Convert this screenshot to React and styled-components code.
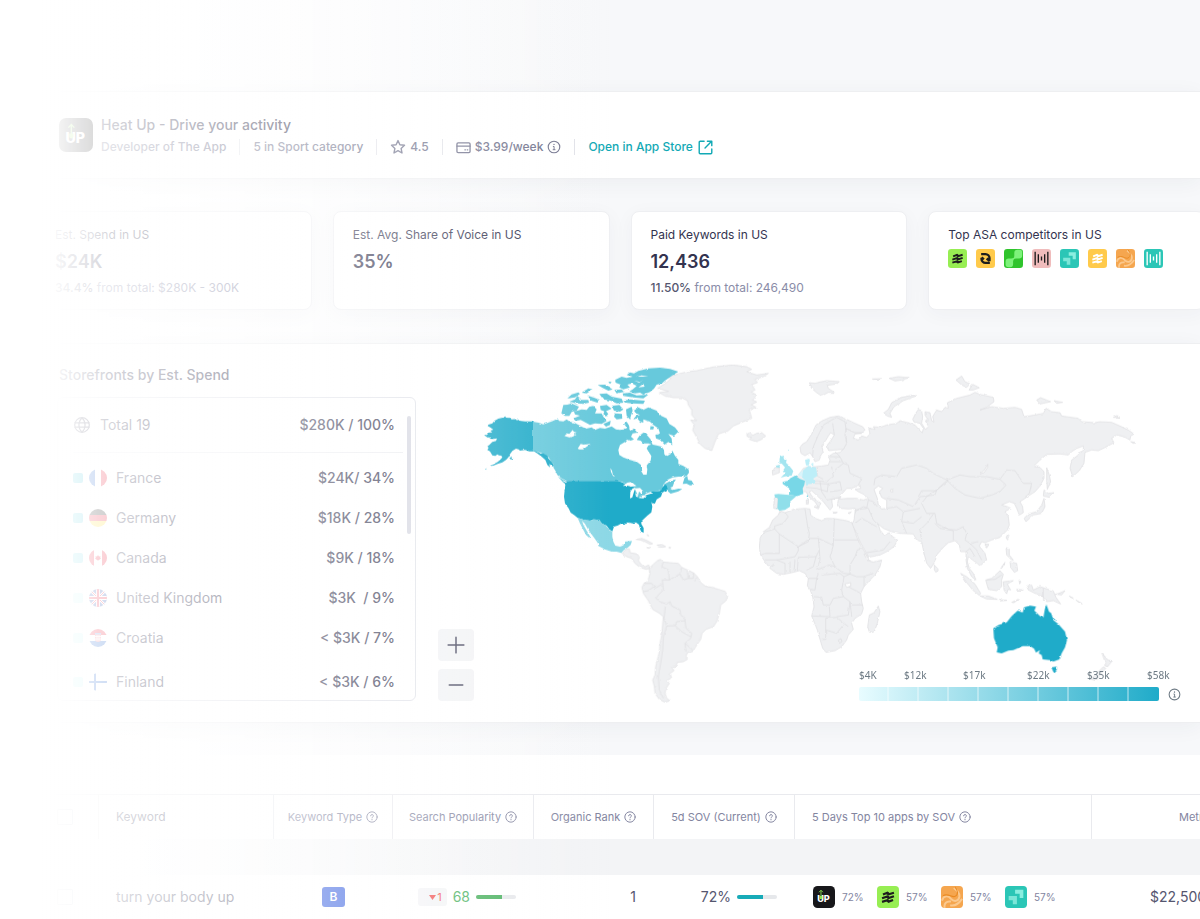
import React from "react";
import styled, { createGlobalStyle } from "styled-components";

const GlobalStyle = createGlobalStyle`
  * {
    box-sizing: border-box;
  }
  body {
    margin: 0;
    background: #f8f9fb;
    color: #33334f;
    font-family: Inter, "Liberation Sans", sans-serif;
    font-size: 14px;
    line-height: 20px;
  }
  h1, h2, h3, p, ul {
    margin: 0;
    padding: 0;
    list-style: none;
  }
`;

const Page = styled.div`
  position: relative;
  min-height: 100vh;
  padding-top: 91px;
  overflow: hidden;
  background: linear-gradient(90deg, #fff 100px, #f7f8fa 600px);
`;

const Fade = styled.div`
  position: absolute;
  inset: 0;
  pointer-events: none;
  background: linear-gradient(
    90deg,
    #fff 42px,
    rgba(255, 255, 255, 0.8) 110px,
    rgba(255, 255, 255, 0.52) 300px,
    rgba(255, 255, 255, 0) 610px
  );
`;

const Header = styled.header`
  display: flex;
  gap: 8px;
  padding: 26px 59px 23px;
  background: #fff;
  border: 1px solid #eeeff1;
  border-width: 1px 0;
  box-shadow: 0 4px 20px rgba(40, 50, 80, 0.05);
`;

const HeaderText = styled.div`
  display: flex;
  flex-direction: column;
  margin-top: -3px;
  gap: 4px;
`;

const AppTitle = styled.h1`
  font-size: 14px;
  line-height: 20px;
  font-weight: 500;
`;

const Meta = styled.div`
  display: flex;
  align-items: center;
  font-size: 12px;
  line-height: 16px;
  font-weight: 500;
  color: #70728c;
`;

const MetaItem = styled.span`
  display: flex;
  align-items: center;
  gap: 4px;
  padding-right: 13px;
  margin-right: 13px;
  border-right: 1px solid #e1e2e8;
`;

const StoreLink = styled.a`
  display: flex;
  align-items: center;
  gap: 5px;
  color: #12a9b5;
  text-decoration: none;
`;

const Cards = styled.section`
  display: grid;
  grid-template-columns: repeat(4, 1fr);
  gap: 21px;
  width: calc(100% - 30px);
  margin: 32px 0 33px 35px;
`;

const Card = styled.article`
  padding: 14px 19px 12px;
  background: #fff;
  border: 1px solid #eeeff2;
  border-radius: 8px;
  box-shadow: 0 4px 20px rgba(40, 50, 80, 0.04);
`;

const CardTitle = styled.h2`
  font-size: 12px;
  line-height: 18px;
  font-weight: 400;
`;

const CardValue = styled.p`
  margin: 5px 0 4px;
  font-size: 18px;
  line-height: 26px;
  font-weight: 600;
`;

const CardNote = styled.p`
  font-size: 12px;
  line-height: 18px;
  color: #8a8ca8;
  b {
    font-weight: 500;
    color: #55566f;
  }
`;

const IconRow = styled.div`
  display: flex;
  gap: 9px;
  margin-top: 5px;
`;

const Storefronts = styled.section`
  display: flex;
  align-items: flex-start;
  background: #fff;
  border: 1px solid #eeeff1;
  border-width: 1px 0;
  box-shadow: 0 4px 20px rgba(40, 50, 80, 0.05);
`;

const ListColumn = styled.div`
  flex: 0 0 416px;
  padding: 21px 0 21px 57px;
`;

const SectionTitle = styled.h2`
  margin: 0 2px 12px;
  font-size: 14px;
  line-height: 20px;
  font-weight: 500;
`;

const ListBox = styled.div`
  position: relative;
  max-height: 304px;
  padding: 0 12px 0 15px;
  overflow: hidden;
  border: 1px solid #dfe1e8;
  border-radius: 6px;
`;

const ScrollThumb = styled.div`
  position: absolute;
  top: 18px;
  right: 4px;
  width: 4px;
  height: 118px;
  border-radius: 2px;
  background: #d3d5e0;
`;

const TotalRow = styled.div`
  display: flex;
  align-items: center;
  gap: 10px;
  height: 55px;
  margin-bottom: 5px;
  padding: 0 8px 0 1px;
  border-bottom: 1px solid #ebecf0;
`;

const CountryRow = styled.li`
  display: flex;
  align-items: center;
  height: 40px;
  padding-right: 8px;
  &:last-child {
    margin-top: 4px;
  }
`;

const Swatch = styled.span`
  width: 10px;
  height: 10px;
  margin-right: 6px;
  border-radius: 2px;
  background: ${(props) => props.$color};
`;

const CountryName = styled.span`
  margin-left: 9px;
`;

const RowValue = styled.span`
  margin-left: auto;
  font-weight: 500;
  white-space: pre;
`;

const MapArea = styled.div`
  position: relative;
  flex: 1;
  align-self: stretch;
  padding: 6px 0 0 14px;
`;

const MapSvg = styled.svg`
  display: block;
  width: 100%;
  max-width: 720px;
`;

const ZoomControls = styled.div`
  position: absolute;
  left: 22px;
  bottom: 21px;
  display: flex;
  flex-direction: column;
  gap: 8px;
`;

const ZoomButton = styled.button`
  display: flex;
  align-items: center;
  justify-content: center;
  width: 36px;
  height: 32px;
  padding: 0;
  border: none;
  border-radius: 4px;
  background: #f2f3f5;
  color: #3d3e55;
  cursor: pointer;
`;

const Legend = styled.div`
  position: absolute;
  right: 19px;
  bottom: 21px;
  display: flex;
  align-items: flex-end;
  gap: 9px;
  color: #6d7a84;
`;

const LegendScale = styled.div`
  width: 300px;
`;

const LegendLabels = styled.div`
  display: grid;
  grid-template-columns: 45px 59px 64px 60px 60px 24px;
  margin-bottom: 5px;
  font-family: "Noto Sans", sans-serif;
  font-size: 10px;
  line-height: 14px;
`;

const LegendBar = styled.div`
  display: grid;
  grid-template-columns: repeat(10, 1fr);
  height: 14px;
  border-radius: 2px;
  overflow: hidden;
  background: linear-gradient(90deg, #e8fcff, #1fabc9);
`;

const LegendStep = styled.span`
  border-right: 2px solid rgba(255, 255, 255, 0.35);
  &:last-child {
    border: none;
  }
`;

const KeywordSection = styled.section`
  margin-top: 32px;
  padding-top: 39px;
  background: #fff;
`;

const KeywordTable = styled.table`
  width: 100%;
  table-layout: fixed;
  border-collapse: separate;
  border-spacing: 0;
`;

const HeadCell = styled.th`
  height: 45px;
  padding: 0 ${(props) => props.$pad || 0}px;
  border-top: 1px solid #e9eaee;
  border-right: 1px solid #e9eaee;
  font-size: ${(props) => (props.$large ? 12 : 11)}px;
  line-height: 16px;
  font-weight: 400;
  color: ${(props) => (props.$large ? "#55566f" : "#83859f")};
  text-align: left;
  white-space: nowrap;
  overflow: hidden;
  &:last-child {
    border-right: none;
  }
`;

const HeadLabel = styled.span`
  display: flex;
  align-items: center;
  justify-content: ${(props) => (props.$center ? "center" : "flex-start")};
  gap: 4px;
`;

const BandCell = styled.td`
  height: 36px;
  padding: 0;
  background: linear-gradient(90deg, #fff 60px, #f3f4f6 500px);
`;

const Cell = styled.td`
  height: 44px;
  padding: 0 ${(props) => props.$pad || 0}px;
  white-space: nowrap;
  overflow: hidden;
  color: #55566f;
`;

const CellFlex = styled.div`
  display: flex;
  align-items: center;
  justify-content: ${(props) => props.$justify || "flex-end"};
  gap: 6px;
`;

const CheckBox = styled.input`
  appearance: none;
  display: block;
  width: 16px;
  height: 16px;
  margin: 0 0 0 57px;
  border: 1px solid #c9ccd6;
  border-radius: 1px;
`;

const TypeBadge = styled.span`
  width: 23px;
  border-radius: 3px;
  background: #3a62e0;
  color: #fff;
  font-size: 12px;
  font-weight: 600;
  text-align: center;
`;

const Drop = styled.span`
  display: flex;
  align-items: center;
  justify-content: flex-end;
  gap: 1px;
  width: 29px;
  height: 18px;
  padding-right: 5px;
  border-radius: 3px;
  background: #f3f4f6;
  color: #f0504f;
  font-size: 11px;
`;

const Score = styled.span`
  color: #47b05c;
`;

const Track = styled.span`
  width: 40px;
  height: 4px;
  border-radius: 2px;
  overflow: hidden;
  background: #e6e8eb;
`;

const Fill = styled.span`
  display: block;
  height: 100%;
  background: ${(props) => props.$color};
`;

const AppList = styled.div`
  display: flex;
  margin-left: 1px;
`;

const AppShare = styled.span`
  display: flex;
  align-items: center;
  gap: 7px;
  flex: 0 0 64px;
  font-size: 10px;
  color: #83859f;
`;

/* ---------- icons ---------- */

const LineIcon = ({ size = 14, width = 1.3, children }) => (
  <svg width={size} height={size} viewBox="0 0 16 16" fill="none" stroke="currentColor" strokeWidth={width} strokeLinecap="round" strokeLinejoin="round" aria-hidden="true">
    {children}
  </svg>
);

const InfoIcon = ({ size = 14 }) => (
  <LineIcon size={size}>
    <circle cx="8" cy="8" r="6.6" />
    <path d="M7.2 7.4h.9v3.5M7 11.100h2.200" strokeWidth="1.100" />
    <path d="M8 4.900v.2" strokeWidth="1.500" />
  </LineIcon>
);

const HelpIcon = () => (
  <LineIcon size={12} width={1.3}>
    <circle cx="8" cy="8" r="6.9" />
    <path d="M6.2 6.4a1.8 1.8 0 1 1 2.6 1.7c-.6.3-.8.6-.8 1.1" />
    <path d="M8 11.3v.2" strokeWidth="1.6" />
  </LineIcon>
);

const StarIcon = () => (
  <LineIcon size={16} width={1.4}>
    <path d="M8 1.6l1.9 4.2 4.6.5-3.4 3.1.9 4.6L8 11.7 4 14l.9-4.6L1.5 6.3l4.6-.5z" />
  </LineIcon>
);

const PriceIcon = () => (
  <LineIcon size={15} width={1.4}>
    <rect x="1" y="3" width="14" height="10.5" rx="1.2" />
    <path d="M1 6.500h14M9.500 10.500h.5M12 10.500h.5" />
  </LineIcon>
);

const OpenIcon = () => (
  <LineIcon size={15} width={1.5}>
    <path d="M6.500 1.300H2.300a1 1 0 0 0-1 1v11.400a1 1 0 0 0 1 1h11.400a1 1 0 0 0 1-1V9.500" />
    <path d="M10 1.300h4.700V6M14.300 1.700L7.500 8.500" />
  </LineIcon>
);

const GlobeIcon = () => (
  <LineIcon size={16} width={1.2}>
    <circle cx="8" cy="8" r="7.3" />
    <path d="M1 5.800h14M1 10.200h14M8 .7C3.900 4.500 3.900 11.500 8 15.300M8 .7c4.100 3.800 4.100 10.800 0 14.600" />
  </LineIcon>
);

const UpText = styled.text`
  font: 800 10px Inter, sans-serif;
  fill: #fff;
`;

const art = {
  up: (
    <>
      <rect width="24" height="24" rx="5" fill="#17171a" />
      <UpText x="4.5" y="17.5">UP</UpText>
      <path d="M8.700 13V5M6.600 6.800l2.100-2.200 2.100 2.200" stroke="#8be04e" strokeWidth="1" fill="none" />
      <path d="M7.200 11h3v2a1.500 1.500 0 0 1-3 0z" fill="#8be04e" />
    </>
  ),
  bars: (color, mark) => (
    <>
      <rect width="24" height="24" rx="4" fill={color} />
      <path
        d="M6.500 9.200l5.500-2.200v2.300l6.500-2M5.500 13.300l6.500-2.200v2.300l6.500-2.200M5.500 17.300l6.500-2v2l5.500-2"
        stroke={mark}
        strokeWidth="2.400"
        strokeLinejoin="bevel"
        fill="none"
      />
    </>
  ),
  swirl: (
    <>
      <rect width="24" height="24" rx="4" fill="#ffca4b" />
      <path d="M6.500 6.500L12 6.500a5 5 0 0 1 5 5v4M17.500 17.500L12 17.500a5 5 0 0 1-5-5v-1.500M7 10.500l3 2.500M17 15l-3.500-3" stroke="#1d1d1d" strokeWidth="3" fill="none" />
    </>
  ),
  leaf: (
    <>
      <rect width="24" height="24" rx="4" fill="#2fc42c" />
      <path d="M12 11.500q1-1 1-3V5q0-4 4-4h3q3 0 3 3v4q0 4-4 4h-4q-3 0-3.500 3v4q0 4-4 4H6q-4 0-4-3.500V16q0-4 4-4h3q2 0 3-.5z" fill="#7df27a" />
    </>
  ),
  wave: (color, mark) => (
    <>
      <rect width="24" height="24" rx="4" fill={color} />
      <path d="M4 3.500v17M8 6.500v11M12 9.500v5M16 6.500v11M20 3.500v17" stroke={mark} strokeWidth="1.700" />
    </>
  ),
  steps: (
    <>
      <rect width="24" height="24" rx="4" fill="#2bc6b6" />
      <path d="M11 4h9v9h-4V8.500h-5z" fill="#8aeee0" />
      <path d="M4 11h9v9H8.500v-4.500H4z" fill="#7de6d8" />
    </>
  ),
  twist: (
    <>
      <rect width="24" height="24" rx="4" fill="#f5a64f" />
      <path d="M1 16C3 10 8 10 11 14c3 3.500 8 3 9-2 .8-4-2-7-6-10M4 24c-1-5 2-8 7-7M23 14c-4 6-8 8-13 7" stroke="#fbc98e" strokeWidth="2.200" fill="none" />
      <path d="M15 1c4 4 4 9 0 10.500-4 1-7-4-13-1" stroke="#ea8a22" strokeWidth="1.200" fill="none" />
    </>
  ),
};

const AppIcon = ({ size = 19, children }) => (
  <svg width={size} height={size} viewBox="0 0 24 24" aria-hidden="true">
    {children}
  </svg>
);

const flags = {
  France: (
    <>
      <path fill="#fff" d="M0 0h18v18H0z" />
      <path fill="#1057c8" d="M0 0h6v18H0z" />
      <path fill="#e8112d" d="M12 0h6v18h-6z" />
    </>
  ),
  Germany: (
    <>
      <path fill="#111" d="M0 0h18v6H0z" />
      <path fill="#e8112d" d="M0 6h18v6H0z" />
      <path fill="#ffda2c" d="M0 12h18v6H0z" />
    </>
  ),
  Canada: (
    <>
      <path fill="#fff" d="M0 0h18v18H0z" />
      <path fill="#e8112d" d="M0 0h5v18H0zM13 0h5v18h-5zM9 6l1 1.500 1.500-.3-.3 1.500.8.8-2 1.500H9.300V12h-.6v-1H8l-2-1.500.8-.8-.3-1.500 1.500.3z" />
    </>
  ),
  "United Kingdom": (
    <>
      <path fill="#1c48ac" d="M0 0h18v18H0z" />
      <path stroke="#fff" strokeWidth="2.500" d="M0 0l18 18M18 0L0 18" />
      <path stroke="#e8112d" strokeWidth="1" d="M0 0l18 18M18 0L0 18" />
      <path stroke="#fff" strokeWidth="4" d="M9 0v18M0 9h18" />
      <path stroke="#e8112d" strokeWidth="2.200" d="M9 0v18M0 9h18" />
    </>
  ),
  Croatia: (
    <>
      <path fill="#e8112d" d="M0 0h18v6H0z" />
      <path fill="#fff" d="M0 6h18v6H0z" />
      <path fill="#1057c8" d="M0 12h18v6H0z" />
      <path fill="#ef6a78" d="M6 5h6v5q0 3-3 3t-3-3z" />
      <path fill="#5b8fe0" d="M6 4h6v1.500H6z" />
      <path stroke="#fff" strokeWidth=".8" d="M6 7.500h6M6 10h6M8 6v6M10 6v6" />
    </>
  ),
  Finland: (
    <>
      <path fill="#fff" d="M0 0h18v18H0z" />
      <path stroke="#1057c8" strokeWidth="2" d="M6 0v18M0 9h18" />
    </>
  ),
};

const Flag = ({ name }) => (
  <svg width="18" height="18" viewBox="0 0 18 18" role="img" aria-label={name}>
    <clipPath id={`flag-${name[0]}${name.length}`}>
      <circle cx="9" cy="9" r="9" />
    </clipPath>
    <g clipPath={`url(#flag-${name[0]}${name.length})`}>{flags[name]}</g>
  </svg>
);

/* ---------- world map ---------- */

const NORTH_AMERICA = {
  alaska:
    "M309 214L285 214 268 212 262 207 245 208 240 204 228 203 226 199 218 203 205 206 193 213 187 220 175 224 173 228 182 233 190 239 181 242 187 247 176 248 172 254 165 257 172 262 182 262 178 266 190 267 201 265 198 273 187 276 178 285 172 289 176 293 172 300 180 304 184 311 187 316 196 318 202 313 207 316 214 317 217 322 210 330 203 336 190 343 182 348 190 347 203 342 217 337 228 330 235 322 241 311 247 303 258 296 266 298 270 302 285 300 298 304 309 304zM309 302L322 304 332 311 340 310 352 317 355 325 365 336 372 346 369 350 358 342 360 352 352 345 346 330 335 320 322 310zM165 357L170 355 168 359zM238 324L246 320 250 325 243 329z",
  canada:
    "M309 215L325 218 340 223 352 219 365 214 377 209 383 205 387 213 400 214 410 208 420 216 432 217 440 222 455 230 468 236 485 232 495 240 510 234 525 236 545 229 558 238 570 240 580 238 590 232 582 222 590 215 597 226 600 242 612 236 622 248 608 250 603 260 612 268 602 272 592 268 585 276 570 285 565 300 568 315 580 322 600 330 620 335 633 345 633 362 640 374 650 374 652 358 650 346 662 332 664 318 656 306 650 295 655 286 665 283 680 286 695 290 702 300 703 313 712 318 722 312 727 302 735 318 745 330 745 342 760 348 776 358 777 368 770 378 758 380 745 380 728 382 712 390 705 398 700 404 715 396 730 390 738 388 733 396 728 410 720 414 730 420 745 416 757 417 745 424 722 431 714 424 711 408 700 404 695 420 668 425 655 434 640 440 625 442 612 425 605 405 587 402 577 396 563 393 413 393 408 392 395 385 382 375 376 362 370 352 372 345 364 335 356 322 345 315 332 308 322 304 309 304z",
  arctic:
    "M400 165L412 164 425 160 447 170 440 182 425 186 418 198 405 198 394 190zM432 185L455 178 470 180 478 170 490 168 500 178 495 190 515 190 520 200 530 213 515 222 495 220 480 225 462 215 452 210 440 212 430 205 450 197 435 193zM418 155L435 148 442 138 455 150 475 150 477 158 460 162 440 160zM412 145L425 133 445 127 450 132 435 142zM455 128L475 115 488 119 470 130zM472 136L492 143 510 150 502 158 484 152zM503 105L525 104 548 118 535 122 518 114zM535 95L545 96 540 102zM508 132L530 130 545 140 575 146 580 158 560 160 542 152 520 148zM553 120L575 118 582 126 560 130zM510 168L530 165 545 176 525 185 512 180zM525 180L535 192 528 200 520 192zM545 168L568 165 580 178 570 185 552 182zM555 190L575 192 577 206 560 208 552 200zM520 222L542 212 540 225 528 230zM580 152L600 148 645 152 640 162 605 160 585 158zM578 130L600 128 620 136 655 134 640 145 610 142 580 138zM588 178L605 170 608 182 603 196 600 208 590 198zM640 248L648 252 662 268 668 285 655 280 640 280 632 272 620 270 628 258zM662 228L672 230 670 238 660 238z",
  ellesmere:
    "M745 65L720 57 690 53 655 55 625 63 612 70 600 67 590 75 605 80 590 84 575 80 555 90 557 98 572 104 568 112 580 118 600 112 592 104 606 100 620 108 608 118 598 124 615 130 630 128 640 134 660 126 672 116 680 104 696 100 705 92 725 78z",
  baffin:
    "M612 182L625 172 640 180 655 172 680 182 688 195 710 205 718 222 735 232 745 245 732 258 715 252 725 265 727 286 715 276 704 284 690 270 678 265 676 255 690 250 685 235 670 225 660 215 640 208 640 218 630 215 622 205 610 208 618 198 630 195 618 190z",
  newfoundland: "M758 402L764 382 772 378 774 390 785 392 792 405 780 406 770 401z",
  island: "M384 380L398 388 410 398 413 405 400 398z",
  usa:
    "M413 393L563 393 577 397 588 403 605 405 612 412 618 440 630 442 642 438 655 434 668 424 690 423 697 412 705 403 711 408 714 418 703 424 697 428 693 440 680 448 675 460 669 462 664 456 667 470 664 487 652 497 640 508 634 515 634 522 641 534 641 547 637 550 631 540 627 524 618 517 608 520 596 517 588 522 574 520 564 526 552 530 547 544 538 538 530 527 515 520 508 510 490 508 480 512 463 510 443 504 432 495 422 488 416 475 405 460 402 440 404 420 406 405 403 396z",
  mexico:
    "M443 504L463 510 480 512 492 508 508 510 517 521 528 527 537 540 547 545 547 560 550 575 556 587 570 590 580 586 584 575 606 573 602 585 594 592 582 600 574 609 560 605 545 605 525 598 505 588 503 578 490 560 475 540 465 522 456 512 460 524 470 542 482 562 478 564 468 555 460 540 450 520z",
  lakes:
    "M403 258L412 250 418 252 428 240 432 246 440 247 432 252 440 254 428 260 418 262zM443 296L452 282 462 284 482 282 470 290 460 298 448 298zM541 354L546 362 548 372 555 380 549 378 543 366zM578 408L592 398 605 396 614 404 620 408 604 410 592 407zM600 445L601 425 608 415 616 413 612 425 607 442zM614 415L630 414 640 424 634 432 627 424 623 442 620 428zM625 444L640 436 655 434 640 445zM645 432L662 426 666 430 650 434zM642 88L630 96 612 92 628 98zM655 80L635 76 618 80 634 80zM640 102L625 112 644 110z",
  caribbean:
    "M618 568L635 565 652 572 668 581 660 583 645 575 630 570zM682 585L695 583 707 590 695 592 683 590zM716 592L722 592 720 595zM650 592L660 593 655 595zM652 553L656 558 653 558z",
};

const ATLANTIC = {
  greenland:
    "M173 115L200 97 213 85 202 80 235 72 262 65 290 62 320 55 345 50 400 45 440 50 455 58 440 65 470 75 505 70 490 80 465 88 472 98 455 104 465 120 454 126 470 135 458 150 470 156 454 164 468 172 448 180 455 205 430 215 400 228 385 242 355 252 345 275 335 302 315 295 300 282 290 262 278 240 283 225 272 210 290 212 275 195 275 180 265 165 262 152 245 143 220 143 195 138 178 128 205 124 184 118z",
  iceland: "M440 253L450 248 458 256 470 250 485 248 497 258 485 268 468 275 448 268 455 262 442 260z",
  south:
    "M147 655L160 643 172 632 182 628 190 636 210 638 235 640 245 652 262 660 280 668 292 680 302 697 315 708 335 712 355 718 375 724 383 738 378 752 362 765 358 790 350 815 340 830 318 838 306 850 302 868 290 885 278 905 262 908 258 918 262 928 250 935 232 937 228 948 215 952 222 962 208 972 212 985 200 992 208 1000 198 1015 195 1030 200 1045 210 1052 195 1057 178 1048 165 1030 163 1010 158 990 165 975 167 950 172 930 178 905 180 880 186 850 188 820 190 800 178 790 158 778 145 752 130 730 126 712 132 700 145 688 150 670z",
  central: "M66 610L78 598 88 596 90 608 112 612 118 622 115 632 125 645 135 650 146 645 149 655 138 658 120 652 105 640 95 625 80 620z",
  borders:
    "M132 700L155 700 165 715 187 702M130 725L145 722 165 708M187 690L190 720 175 735 168 745 182 756 200 762 210 755M190 636L185 650 205 660 208 690 187 690M245 652L240 672 225 680 208 690M262 662L265 685 250 690 240 672M280 668L280 685 265 685M292 682L283 690M210 755L215 768 240 780 242 795 255 805 255 812 230 815 225 827 200 828 192 805 196 770M255 812L258 835 275 850 272 865 255 880 258 905M225 827L245 845 272 860M255 880L278 900M200 828L190 860 188 900 182 940 175 980 178 1020 190 1045",
};

const EURASIA = {
  mainland:
    "M318 205L345 218 365 220 345 222 340 235 355 240 365 228 380 232 390 222 386 204 405 208 400 200 420 202 440 195 470 190 480 182 500 187 515 192 525 195 540 212 547 218 550 205 540 190 522 186 518 178 526 162 535 148 545 152 548 170 545 190 556 208 566 200 556 182 565 182 555 165 555 155 570 158 575 182 582 186 578 170 590 150 605 155 615 142 625 145 622 128 650 115 690 105 705 97 720 103 760 112 762 125 740 142 720 150 755 140 790 145 825 142 845 148 852 170 885 165 910 160 918 145 935 155 960 158 965 168 1015 175 1025 185 1065 188 1080 185 1115 187 1140 198 1165 210 1182 222 1172 228 1170 240 1152 230 1130 225 1115 235 1122 248 1100 260 1075 272 1055 270 1035 277 1032 310 1018 332 998 350 990 325 995 300 1015 285 1030 270 1030 258 1010 265 995 275 985 285 960 282 920 283 900 300 880 320 900 322 912 335 912 355 900 378 885 395 865 408 855 415 840 425 848 440 850 458 838 465 830 445 823 430 808 425 785 435 802 440 812 445 795 455 805 470 808 495 802 510 780 532 755 540 735 548 725 545 718 558 735 580 740 600 720 618 712 610 698 600 685 590 682 605 688 625 700 640 708 660 695 650 682 625 678 600 678 575 662 575 658 555 645 542 625 548 610 562 590 585 585 605 572 625 560 610 552 580 545 545 530 540 520 522 480 520 455 515 430 505 415 492 420 510 432 525 448 518 458 530 473 540 462 560 440 575 420 585 385 592 380 580 360 545 345 510 335 495 342 480 345 455 345 445 325 447 300 445 293 430 295 418 320 415 350 415 370 420 385 415 375 405 355 395 345 388 362 385 360 375 335 385 320 385 312 395 302 405 302 414 285 415 275 420 278 440 270 450 262 440 250 425 235 410 215 392 208 395 215 408 230 420 243 430 235 442 225 425 208 412 198 395 185 395 185 370 170 350 175 345 190 325 205 320 225 320 245 318 265 315 270 300 265 290 280 280 300 277 308 270 320 250z",
  scandinavia:
    "M180 262L183 280 195 287 210 278 218 290 225 305 238 300 243 285 250 275 245 258 258 240 265 228 272 218 283 225 270 245 262 255 265 272 285 270 310 268 320 250 315 225 318 205 345 218 365 218 375 210 368 200 345 190 320 178 295 168 270 172 245 183 228 195 215 222 200 245 188 252z",
  africa:
    "M120 452L135 458 160 448 195 445 210 447 212 465 225 475 245 482 260 475 285 476 320 482 335 487 342 505 350 530 362 555 378 582 388 603 400 606 425 600 420 620 405 645 388 662 372 680 362 700 365 725 370 745 365 762 345 775 335 790 340 808 325 825 320 840 305 860 285 872 258 877 248 865 240 838 232 810 222 785 215 768 222 740 218 710 210 688 202 678 205 655 195 640 178 632 155 638 130 643 110 640 90 625 75 605 62 585 58 565 60 535 70 515 88 502 98 480 115 465z",
  islands:
    "M415 738L420 755 412 790 402 818 388 816 383 800 388 765 402 758zM103 413L113 413 112 447 101 445zM97 335L105 322 118 323 118 338 98 345zM199 420L206 420 205 432 199 432zM222 440L238 440 235 447zM278 457L292 457 285 460zM324 459L334 456 328 461zM208 68L225 70 240 66 260 62 298 65 290 72 262 76 265 85 283 97 265 97 245 108 230 98 215 85zM397 57L425 56 415 62zM448 55L475 50 508 53 485 60 465 63zM430 160L445 148 455 128 480 113 520 105 528 108 490 122 462 140 450 160 455 172 442 168zM648 60L665 48 675 65 690 72 680 82 665 75zM687 90L698 73 718 83 700 90zM890 120L902 113 932 125 900 132zM942 122L968 127 950 130zM1120 172L1130 167 1140 172zM1172 245L1188 248 1180 250zM920 323L928 345 932 365 922 388 920 360zM912 390L925 400 942 398 928 412 910 408zM912 415L915 440 905 460 880 465 858 485 852 475 865 462 890 455 905 435zM802 525L808 527 803 540 798 533zM735 552L747 553 740 564zM798 563L808 567 808 585 820 600 815 600 800 585zM810 605L830 610 833 632 823 637 812 622zM782 625L795 607 786 624zM583 615L595 628 588 637 583 630zM662 640L680 650 705 672 722 700 718 706 698 690 678 665zM720 708L745 708 772 718 740 717zM777 719L800 721 780 723zM815 727L835 718 822 728zM737 660L755 655 780 632 790 643 785 660 785 680 770 692 745 688zM790 665L820 662 802 672 812 690 804 688 800 702 792 690zM837 660L843 665 839 672zM830 688L850 690 832 691zM860 678L875 675 880 690 900 680 940 693 948 712 962 732 940 722 920 725 905 705 885 700 865 690zM950 703L975 692 965 705zM988 708L1000 715 990 711zM1008 720L1027 732 1012 724z",
  water:
    "M402 388L415 378 428 385 418 395 425 412 440 420 440 445 425 447 415 435 412 415zM743 313L735 328 720 342 732 338 743 322zM315 672L332 668 332 678 320 682zM376 582L386 598 384 603 372 582zM452 389L458 388 458 396 452 395z",
  borders:
    "M104 507L118 522 175 560 205 545 208 520 203 500 200 480 195 447M118 522L118 580 75 580 62 585M104 507L70 517M104 507L104 498 130 490 145 470 135 458M175 560L175 572 165 590 140 595 110 600M175 560L210 535 235 535 238 570 228 590 175 592M235 535L280 556M283 476L280 556M283 540L355 540M280 556L270 590 285 620 310 640 330 642 330 615 345 590 352 570 368 565M238 570L240 600 230 630 270 615 285 620M245 645L300 640 312 650 305 690 310 710 280 715 270 735 250 735 245 712 222 710M215 768L270 770 268 740M245 838L257 838 257 775 290 772 325 800M257 810L275 815 290 820 310 795M330 642L350 650 370 650 400 640M372 650L372 678M325 680L362 700M335 735L368 735M310 710L330 725 325 765 290 770M330 725L335 770M75 600L110 600 135 610 135 640M88 622L105 610M150 605L150 638M165 600L162 635M175 592L172 632M228 590L220 620 200 630M205 655L230 655 235 640M230 655L225 690 212 688M312 650L330 642M295 840L303 836 306 845 298 850z M402 375L405 355 425 345 470 350 485 325 530 315 560 325 580 340 610 355 625 362 590 390 585 405 540 410 520 440 475 420 440 415M620 360L660 345 690 350 740 350 780 358 798 375 780 395 755 405 720 415 675 405 645 385zM780 358L800 330 825 332 850 370 875 370 868 400 855 412M620 362L590 390 560 410 545 430 560 460 585 460 590 490 620 508 650 510 670 500M545 540L540 510 560 490 580 462M585 490L600 505 640 512M640 512L640 540M670 500L680 520 675 540 690 550M690 550L710 570 725 600M678 575L690 565 705 590M690 550L715 545M440 445L470 440 490 455 485 485 500 520M485 485L520 490 545 470M490 455L540 445M345 455L370 440 385 445 400 480 415 495M345 490L365 475 410 500M380 578L430 570 450 545M345 450L380 445 385 420 400 425 412 440M535 410L545 392 590 392M285 330L310 310 325 315 330 340 365 355 355 375M232 322L232 348 250 358M275 320L280 350 260 365 222 362M225 370L265 372 300 365 305 390 270 395M240 365L245 395 262 420M265 370L262 395 230 385 198 382M270 290L300 290M268 305L305 305M285 275L300 290 310 310M262 420L300 412M218 290L220 260 235 225 250 195 275 180M283 225L278 190M275 180L290 172 315 185 318 210M910 685L910 722M740 660L765 658 785 645",
};

const tints = [
  { fill: "#78d7e7", d: "M165 347L180 357 195 362 193 375 188 385 190 402 170 408 147 405 148 385 128 372 128 366 145 362 150 355zM200 408L204 405 203 418z" },
  { fill: "#90dfea", d: "M103 403L115 402 147 405 170 408 150 425 150 440 135 450 118 452 112 445 114 415 105 412z" },
  { fill: "#bdeef8", d: "M188 332L205 318 228 322 232 348 220 355 225 370 198 373 195 360 186 352zM195 300L208 296 210 304 206 316 198 316zM212 312L220 309 220 317z" },
  { fill: "#d8f5fb", d: "M173 345L188 330 186 350z" },
  { fill: "#a3e5f0", d: "M120 290L133 287 130 294 140 300 138 308 148 318 160 333 155 347 136 349 122 353 135 340 128 334 135 322 126 312 118 308zM106 318L118 315 120 323 110 322zM144 269L147 270 145 274z" },
];

const OCEANIA = {
  australia:
    "M460 205L475 195 500 187 515 168 533 152 548 158 552 142 570 137 588 140 583 152 600 168 610 173 614 150 619 133 627 155 634 160 640 180 655 192 675 215 681 240 675 262 665 280 658 298 640 305 630 300 608 298 605 285 596 280 600 270 588 278 582 266 570 258 548 258 520 270 505 272 485 280 470 277 473 262 462 235zM634 322L650 320 650 330 641 338z",
  zealand: "M786 280L797 292 803 300 817 302 803 320 795 318 795 305zM790 320L797 325 780 345 768 362 752 358 770 340z",
};

const WorldMap = () => (
  <MapSvg viewBox="0 0 2160 1110" role="img" aria-label="Estimated spend by country">
    <filter id="coast" x="0" y="0" width="100%" height="100%" filterUnits="userSpaceOnUse" colorInterpolationFilters="sRGB">
      <feTurbulence type="fractalNoise" baseFrequency="0.07" numOctaves="2" seed="4" />
      <feDisplacementMap in="SourceGraphic" scale="7" xChannelSelector="R" yChannelSelector="G" />
    </filter>
    <g filter="url(#coast)" strokeLinejoin="round">
      <g fill="#eff0f2" stroke="#dcdde0" strokeWidth="2">
        <path d={NORTH_AMERICA.caribbean} />
        <g transform="translate(510 0)">
          <path d={ATLANTIC.greenland} />
          <path d={ATLANTIC.iceland} />
          <path d={ATLANTIC.south} />
          <path d={ATLANTIC.central} />
          <path d={ATLANTIC.borders} fill="none" />
        </g>
        <g transform="translate(930 30)">
          <path d={EURASIA.mainland} />
          <path d={EURASIA.scandinavia} />
          <path d={EURASIA.africa} />
          <path d={EURASIA.islands} />
          <path d={EURASIA.borders} fill="none" />
          <path d={EURASIA.water} fill="#fff" />
          {tints.map((tint) => (
            <path key={tint.fill} d={tint.d} fill={tint.fill} stroke="none" />
          ))}
        </g>
        <path d={OCEANIA.zealand} transform="translate(1230 630)" />
      </g>
      <path d={OCEANIA.australia} transform="translate(1230 630)" fill="#1fabc9" />
      <g fill="#67c9dc">
        <path d={NORTH_AMERICA.canada} />
        <path d={NORTH_AMERICA.arctic} />
        <path d={NORTH_AMERICA.ellesmere} />
        <path d={NORTH_AMERICA.baffin} />
        <path d={NORTH_AMERICA.newfoundland} />
        <path d={NORTH_AMERICA.island} />
      </g>
      <g fill="#1fabc9">
        <path d={NORTH_AMERICA.alaska} />
        <path d={NORTH_AMERICA.usa} />
      </g>
      <path d={NORTH_AMERICA.mexico} fill="#8dd8e6" />
      <path d={NORTH_AMERICA.lakes} fill="#fff" />
    </g>
  </MapSvg>
);

/* ---------- data ---------- */

const competitors = [
  art.bars("#97ee53", "#1d1d1d"),
  art.swirl,
  art.leaf,
  art.wave("#f0bcbc", "#1d1d1d"),
  art.steps,
  art.bars("#ffca4b", "#fff"),
  art.twist,
  art.wave("#2bc6b6", "#fff"),
];

const countries = [
  { name: "France", value: "$24K/ 34%", color: "#1fb9d2" },
  { name: "Germany", value: "$18K / 28%", color: "#3cc6da" },
  { name: "Canada", value: "$9K / 18%", color: "#5cd2e2" },
  { name: "United Kingdom", value: "$3K  / 9%", color: "#b9f2f5" },
  { name: "Croatia", value: "< $3K / 7%", color: "#b9f2f5" },
  { name: "Finland", value: "< $3K / 6%", color: "#b9f2f5" },
];

const legendLabels = ["$4K", "$12k", "$17k", "$22k", "$35k", "$58k"];

const topApps = [
  { icon: art.up, share: "72%" },
  { icon: art.bars("#97ee53", "#1d1d1d"), share: "57%" },
  { icon: art.twist, share: "57%" },
  { icon: art.steps, share: "57%" },
];

const Bar = ({ value, color }) => (
  <Track>
    <Fill $color={color} style={{ width: `${value}%` }} />
  </Track>
);

const HelpHead = ({ children, center = true, ...rest }) => (
  <HeadCell scope="col" {...rest}>
    <HeadLabel $center={center}>
      {children} <HelpIcon />
    </HeadLabel>
  </HeadCell>
);

export default function App() {
  return (
    <Page>
      <GlobalStyle />
      <Header>
        <AppIcon size={34}>{art.up}</AppIcon>
        <HeaderText>
          <AppTitle>Heat Up - Drive your activity</AppTitle>
          <Meta>
            <MetaItem>Developer of The App</MetaItem>
            <MetaItem>5 in Sport category</MetaItem>
            <MetaItem>
              <StarIcon /> 4.5
            </MetaItem>
            <MetaItem>
              <PriceIcon /> $3.99/week <InfoIcon />
            </MetaItem>
            <StoreLink href="#store">
              Open in App Store <OpenIcon />
            </StoreLink>
          </Meta>
        </HeaderText>
      </Header>

      <Cards>
        <Card>
          <CardTitle>Est. Spend in US</CardTitle>
          <CardValue>$24K</CardValue>
          <CardNote>
            <b>34.4%</b> from total: $280K - 300K
          </CardNote>
        </Card>
        <Card>
          <CardTitle>Est. Avg. Share of Voice in US</CardTitle>
          <CardValue>35%</CardValue>
        </Card>
        <Card>
          <CardTitle>Paid Keywords in US</CardTitle>
          <CardValue>12,436</CardValue>
          <CardNote>
            <b>11.50%</b> from total: 246,490
          </CardNote>
        </Card>
        <Card>
          <CardTitle>Top ASA competitors in US</CardTitle>
          <IconRow>
            {competitors.map((icon, index) => (
              <AppIcon key={index}>{icon}</AppIcon>
            ))}
          </IconRow>
        </Card>
      </Cards>

      <Storefronts>
        <ListColumn>
          <SectionTitle>Storefronts by Est. Spend</SectionTitle>
          <ListBox>
            <TotalRow>
              <GlobeIcon />
              <span>Total 19</span>
              <RowValue>$280K / 100%</RowValue>
            </TotalRow>
            <ul>
              {countries.map((country) => (
                <CountryRow key={country.name}>
                  <Swatch $color={country.color} />
                  <Flag name={country.name} />
                  <CountryName>{country.name}</CountryName>
                  <RowValue>{country.value}</RowValue>
                </CountryRow>
              ))}
            </ul>
            <ScrollThumb />
          </ListBox>
        </ListColumn>
        <MapArea>
          <WorldMap />
          <ZoomControls>
            <ZoomButton type="button" aria-label="Zoom in">
              <LineIcon size={18} width={1.3}>
                <path d="M1 8h14M8 1v14" />
              </LineIcon>
            </ZoomButton>
            <ZoomButton type="button" aria-label="Zoom out">
              <LineIcon size={18} width={1.3}>
                <path d="M2 8h12" />
              </LineIcon>
            </ZoomButton>
          </ZoomControls>
          <Legend>
            <LegendScale>
              <LegendLabels>
                {legendLabels.map((label) => (
                  <span key={label}>{label}</span>
                ))}
              </LegendLabels>
              <LegendBar>
                {Array.from({ length: 10 }, (_, i) => (
                  <LegendStep key={i} />
                ))}
              </LegendBar>
            </LegendScale>
            <InfoIcon size={13} />
          </Legend>
        </MapArea>
      </Storefronts>

      <KeywordSection>
        <KeywordTable>
          <colgroup>
            <col width="99" />
            <col width="175" />
            <col width="119" />
            <col width="141" />
            <col width="120" />
            <col width="141" />
            <col width="297" />
            <col />
          </colgroup>
          <thead>
            <tr>
              <HeadCell scope="col">
                <CheckBox type="checkbox" aria-label="Select all keywords" />
              </HeadCell>
              <HeadCell scope="col" $large $pad={17}>
                Keyword
              </HeadCell>
              <HelpHead>Keyword Type</HelpHead>
              <HelpHead>Search Popularity</HelpHead>
              <HelpHead>Organic Rank</HelpHead>
              <HelpHead>5d SOV (Current)</HelpHead>
              <HelpHead center={false} $pad={17}>
                5 Days Top 10 apps by SOV
              </HelpHead>
              <HeadCell scope="col" $pad={87}>
                Metrics
              </HeadCell>
            </tr>
          </thead>
          <tbody>
            <tr>
              <BandCell colSpan={8} />
            </tr>
            <tr>
              <Cell>
                <CheckBox type="checkbox" aria-label="Select turn your body up" />
              </Cell>
              <Cell $pad={17}>turn your body up</Cell>
              <Cell>
                <CellFlex $justify="center">
                  <TypeBadge>B</TypeBadge>
                </CellFlex>
              </Cell>
              <Cell $pad={18}>
                <CellFlex>
                  <Drop>
                    <svg width="7" height="5" viewBox="0 0 7 5" aria-hidden="true">
                      <path d="M0 0h7L3.500 5z" fill="currentColor" />
                    </svg>
                    1
                  </Drop>
                  <Score>68</Score>
                  <Bar value={65} color="#47b05c" />
                </CellFlex>
              </Cell>
              <Cell $pad={18}>
                <CellFlex>1</CellFlex>
              </Cell>
              <Cell $pad={18}>
                <CellFlex>
                  72% <Bar value={65} color="#17abb8" />
                </CellFlex>
              </Cell>
              <Cell $pad={17}>
                <AppList>
                  {topApps.map((app, index) => (
                    <AppShare key={index}>
                      <AppIcon size={22}>{app.icon}</AppIcon>
                      {app.share}
                    </AppShare>
                  ))}
                </AppList>
              </Cell>
              <Cell $pad={58}>$22,500</Cell>
            </tr>
          </tbody>
        </KeywordTable>
      </KeywordSection>
      <Fade />
    </Page>
  );
}
